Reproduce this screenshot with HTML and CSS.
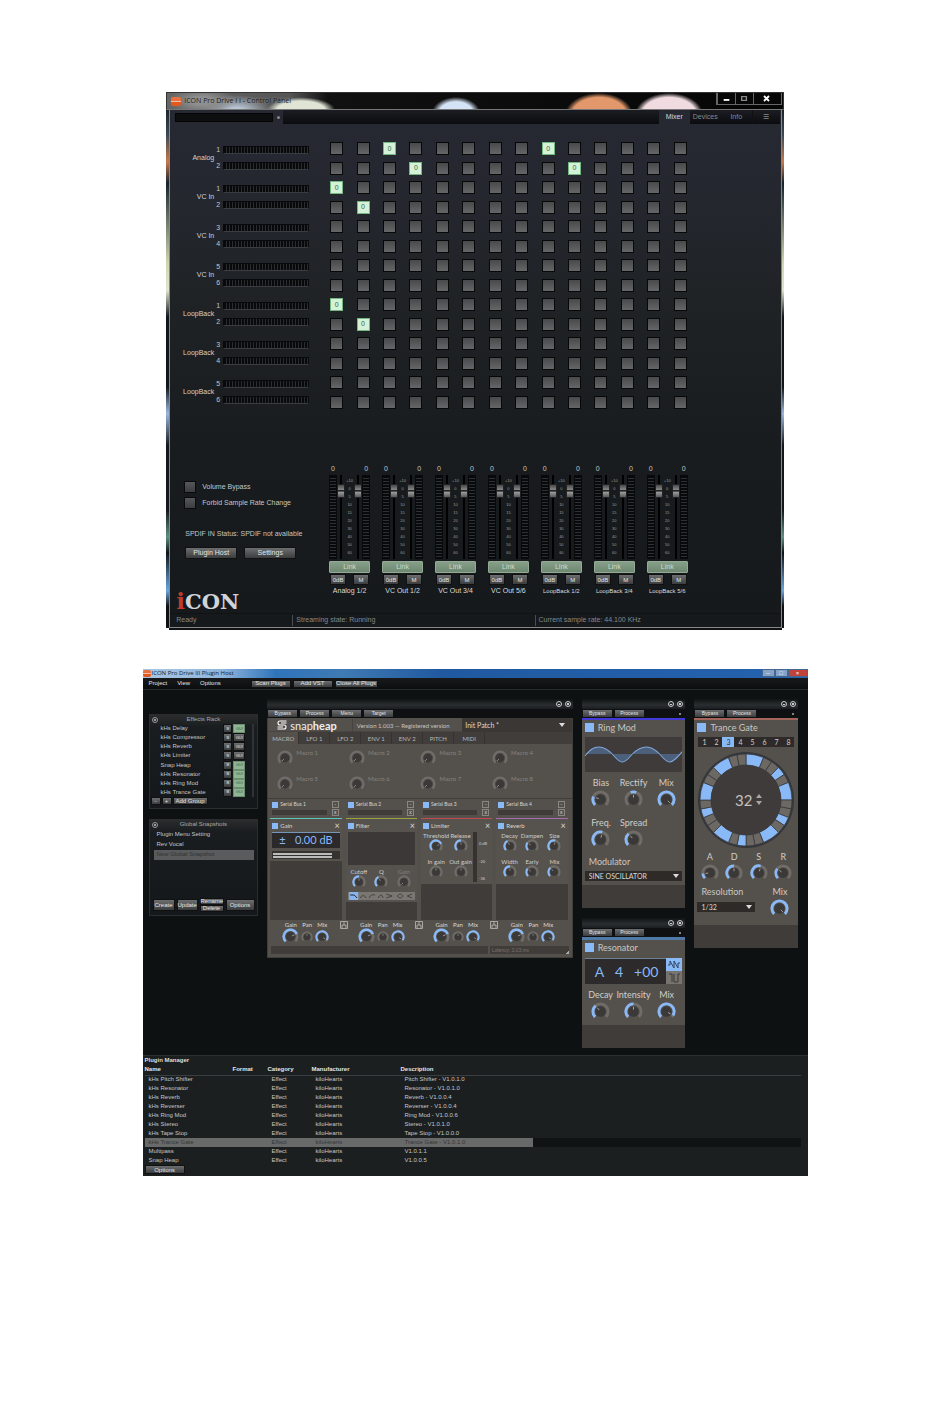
FILE: index.html
```html
<!DOCTYPE html>
<html lang="en">

<head>
    <meta charset="UTF-8">
    <meta name="viewport" content="width=device-width, initial-scale=1.0">
    <title>iCON Pro Drive III</title>
    <link rel="stylesheet" href="styles.css">
</head>

<body>
    <!-- Control panel -->
    <section class="control-panel">
        <header class="cp-title">
            <span class="app-icon"></span>
            <h1>ICON Pro Drive I I - Control Panel</h1>
            <div class="cp-window-buttons">
                <button type="button" aria-label="Minimize"><svg viewBox="0 0 18 11"><path d="M6 7h6" stroke="#fff" stroke-width="2"/></svg></button>
                <button type="button" aria-label="Maximize"><svg viewBox="0 0 18 11"><path d="M6 3.500h5v4h-5z" fill="none" stroke="#888" stroke-width="1.500"/></svg></button>
                <button type="button" class="wide" aria-label="Close"><svg viewBox="0 0 18 11"><path d="M6 3l5 5M11 3l-5 5" stroke="#fff" stroke-width="1.800"/></svg></button>
            </div>
        </header>

        <div class="cp-frame">
            <div class="cp-toolbar">
                <select class="preset" aria-label="Preset"><option></option></select>
                <span class="preset-arrow"></span>
                <nav class="tabs">
                    <button type="button" class="active">Mixer</button>
                    <button type="button">Devices</button>
                    <button type="button">Info</button>
                    <button type="button" class="menu">&#9776;</button>
                </nav>
            </div>

            <div class="routing">
                <div class="inputs" id="inputs"></div>
                <div class="matrix" id="matrix"></div>
            </div>

            <div class="outputs">
                <div class="options">
                    <label class="check"><input type="checkbox">Volume Bypass</label>
                    <label class="check"><input type="checkbox">Forbid Sample Rate Change</label>
                    <p class="spdif">SPDIF IN Status: SPDIF not available</p>
                    <div class="option-buttons">
                        <button type="button" class="btn">Plugin Host</button>
                        <button type="button" class="btn">Settings</button>
                    </div>
                    <div class="logo"><span>i</span>CON</div>
                </div>
                <div class="strips" id="strips"></div>
            </div>

            <footer class="statusbar">
                <span>Ready</span>
                <span>Streaming state: Running</span>
                <span>Current sample rate: 44.100 KHz</span>
            </footer>
        </div>
    </section>

    <!-- Plugin host -->
    <section class="plugin-host">
        <header class="ph-title">
            <span class="app-icon"></span>
            <h2>ICON Pro Drive III Plugin Host</h2>
            <div class="ph-window-buttons">
                <button type="button" aria-label="Minimize">&#8211;</button>
                <button type="button" aria-label="Maximize">&#9633;</button>
                <button type="button" class="close" aria-label="Close">&#215;</button>
            </div>
        </header>
        <div class="ph-menu">
            <nav>
                <a href="#">Project</a>
                <a href="#">View</a>
                <a href="#">Options</a>
            </nav>
            <button type="button" class="btn">Scan Plugs</button>
            <button type="button" class="btn">Add VST</button>
            <button type="button" class="btn">Close All Plugs</button>
        </div>

        <div class="workspace">
            <div class="column side">
                <section class="panel rack">
                    <h3><span class="dot"></span>Effects Rack</h3>
                    <ul id="rack"></ul>
                    <div class="rack-buttons">
                        <button type="button" class="btn">-</button>
                        <button type="button" class="btn">+</button>
                        <button type="button" class="btn">Add Group</button>
                    </div>
                </section>
                <section class="panel snapshots">
                    <h3><span class="dot"></span>Global Snapshots</h3>
                    <ul>
                        <li>Plugin Menu Setting</li>
                        <li>Rev Vocal</li>
                        <li class="selected">New Global Snapshot</li>
                    </ul>
                    <div class="snapshot-buttons">
                        <button type="button" class="btn">Create</button>
                        <button type="button" class="btn">Update</button>
                        <div>
                            <button type="button" class="btn">Rename</button>
                            <button type="button" class="btn">Delete</button>
                        </div>
                        <button type="button" class="btn last">Options</button>
                    </div>
                </section>
            </div>

            <div class="column">
                <section class="plugin">
                    <div class="plugin-bar"><i class="min"></i><i class="close"></i></div>
                    <div class="plugin-buttons">
                        <button type="button" class="btn">Bypass</button>
                        <button type="button" class="btn">Process</button>
                        <button type="button" class="btn">Menu</button>
                        <button type="button" class="btn">Target</button>
                    </div>
                    <div class="snapheap">
                        <div class="sh-header">
                            <div class="sh-brand">
                                <svg viewBox="0 0 10 10"><path d="M9.500 1H3Q1 1 1 3T3 5H7.500M.5 9H7Q9 9 9 7T7 5M9.500 3H4M.5 7H6" fill="none" stroke="#fff" stroke-width="1.100"/></svg>
                                <span>snap<b>heap</b></span>
                            </div>
                            <div class="sh-version">Version 1.003 — Registered version</div>
                            <select class="sh-patch" aria-label="Patch"><option>Init Patch *</option></select>
                        </div>
                        <nav class="sh-tabs">
                            <button type="button" class="active">MACRO</button>
                            <button type="button">LFO 1</button>
                            <button type="button">LFO 2</button>
                            <button type="button">ENV 1</button>
                            <button type="button">ENV 2</button>
                            <button type="button">PITCH</button>
                            <button type="button">MIDI</button>
                        </nav>
                        <div class="macros" id="macros"></div>
                        <div class="lanes">
                            <div class="lane">
                                <div class="bus"><label><input type="checkbox" checked>Serial Bus 1</label><i>-</i><span></span><i>x</i></div>
                                <div class="slot">
                                    <div class="module gain">
                                        <h4><label><input type="checkbox" checked>Gain</label><span>&#215;</span></h4>
                                        <div class="gain-value"><span>±</span><span>0.00 dB</span></div>
                                        <div class="gain-meter"><span></span><span></span></div>
                                    </div>
                                </div>
                                <div class="lane-out"></div>
                            </div>
                            <div class="lane">
                                <div class="bus"><label><input type="checkbox" checked>Serial Bus 2</label><i>-</i><span></span><i>x</i></div>
                                <div class="slot">
                                    <div class="module filter">
                                        <h4><label><input type="checkbox" checked>Filter</label><span>&#215;</span></h4>
                                        <div class="filter-graph"></div>
                                        <div class="knobs three" data-size="14" data-knobs="Cutoff:0.5,Q:0.4,Gain:0"></div>
                                        <div class="filter-types">
                                            <svg viewBox="0 0 65 8">
                                                <rect width="9" height="8" fill="#8ab4ee"/>
                                                <path d="M1 3h4l3 3" stroke="#223" fill="none"/>
                                                <path d="M11 6q3-5 6 0M20 6q1-4 6-3M29 6q3-6 5 0M37 2l6 2-6 2M48 4q3-4 6 0-3 4-6 0M63 2l-5 2 5 2" stroke="#444" fill="none"/>
                                            </svg>
                                        </div>
                                    </div>
                                </div>
                                <div class="lane-out"></div>
                            </div>
                            <div class="lane">
                                <div class="bus"><label><input type="checkbox" checked>Serial Bus 3</label><i>-</i><span></span><i>x</i></div>
                                <div class="slot">
                                    <div class="module limiter">
                                        <h4><label><input type="checkbox" checked>Limiter</label><span>&#215;</span></h4>
                                        <div class="limiter-body">
                                            <div class="knobs two" data-size="14" data-knobs="Threshold:0.75,Release:0.5,In gain:0.5:off,Out gain:0.5:off"></div>
                                            <div class="limiter-meter"></div>
                                            <div class="limiter-scale"><span>0 dB</span><span>-20</span><span>-36</span></div>
                                        </div>
                                    </div>
                                </div>
                                <div class="lane-out"></div>
                            </div>
                            <div class="lane">
                                <div class="bus"><label><input type="checkbox" checked>Serial Bus 4</label><i>-</i><span></span><i>x</i></div>
                                <div class="slot">
                                    <div class="module reverb">
                                        <h4><label><input type="checkbox" checked>Reverb</label><span>&#215;</span></h4>
                                        <div class="knobs three" data-size="14" data-knobs="Decay:0.4,Dampen:0.3,Size:0.55,Width:0.5,Early:0.3,Mix:0.35"></div>
                                    </div>
                                </div>
                                <div class="lane-out"></div>
                            </div>
                        </div>
                        <div class="sh-footer"><span></span><span>Latency: 2.03 ms</span></div>
                    </div>
                </section>
            </div>

            <div class="column">
                <section class="plugin fx">
                    <div class="plugin-bar"><i class="min"></i><i class="close"></i></div>
                    <div class="plugin-buttons">
                        <button type="button" class="btn">Bypass</button>
                        <button type="button" class="btn">Process</button>
                        <span class="led"></span>
                    </div>
                    <div class="fx-body ringmod">
                        <label class="fx-name"><input type="checkbox" checked>Ring Mod</label>
                        <svg class="wave" viewBox="0 0 97 35" preserveAspectRatio="none">
                            <path d="M0 17C5 13 8 10 14 10S24 14 27 17S33 25 37 25S44 20 47 17S55 10 61 10S71 14 74 17S80 25 84 25S92 20 97 15V17Z" fill="#4c5f7b"/>
                            <path d="M0 19C5 13 8 10 14 10S24 14 27 17S33 25 37 25S44 20 47 17S55 10 61 10S71 14 74 17S80 25 84 25S92 20 97 14" fill="none" stroke="#7fa8dc"/>
                        </svg>
                        <div class="knobs three" data-size="19" data-knobs="Bias:0.25,Rectify:0.5:c,Mix:1,Freq.:0.55,Spread:0.35"></div>
                        <label class="field" for="modulator">Modulator</label>
                        <select id="modulator"><option>SINE OSCILLATOR</option></select>
                    </div>
                    <div class="fx-foot"></div>
                </section>

                <section class="plugin fx">
                    <div class="plugin-bar"><i class="min"></i><i class="close"></i></div>
                    <div class="plugin-buttons">
                        <button type="button" class="btn">Bypass</button>
                        <button type="button" class="btn">Process</button>
                        <span class="led"></span>
                    </div>
                    <div class="fx-body resonator">
                        <label class="fx-name"><input type="checkbox" checked>Resonator</label>
                        <div class="note">
                            <div><span>A</span><span>4</span><span>+00</span></div>
                            <svg viewBox="0 0 16 26">
                                <rect width="16" height="13" fill="#8ab9f7"/>
                                <rect y="13" width="16" height="13" fill="#77736e"/>
                                <path d="M2 7h2V3l4 7V3l4 7V5h2" fill="none" stroke="#30425c"/>
                                <path d="M3 16h3v8M8 16v8h4v-8h2" fill="none" stroke="#3b3836"/>
                            </svg>
                        </div>
                        <div class="knobs three" data-size="19" data-knobs="Decay:0.35,Intensity:0.5,Mix:0.95"></div>
                    </div>
                    <div class="fx-foot"></div>
                </section>
            </div>

            <div class="column">
                <section class="plugin fx">
                    <div class="plugin-bar"><i class="min"></i><i class="close"></i></div>
                    <div class="plugin-buttons">
                        <button type="button" class="btn">Bypass</button>
                        <button type="button" class="btn">Process</button>
                        <span class="led"></span>
                    </div>
                    <div class="fx-body trance">
                        <label class="fx-name"><input type="checkbox" checked>Trance Gate</label>
                        <div class="patterns">
                            <button type="button">1</button><button type="button">2</button><button type="button" class="active">3</button><button type="button">4</button><button type="button">5</button><button type="button">6</button><button type="button">7</button><button type="button">8</button>
                        </div>
                        <svg class="wheel" id="wheel" viewBox="-49 -49 98 98"></svg>
                        <div class="knobs four" data-size="18" data-knobs="A:0.15,D:0.5,S:0.55,R:0.3"></div>
                        <div class="resolution">
                            <div>
                                <label class="field" for="resolution">Resolution</label>
                                <select id="resolution"><option>1/32</option></select>
                            </div>
                            <div class="knobs one" data-size="19" data-knobs="Mix:1"></div>
                        </div>
                    </div>
                    <div class="fx-foot"></div>
                </section>
            </div>
        </div>

        <div class="manager">
            <h3>Plugin Manager</h3>
            <table>
                <thead>
                    <tr><th>Name</th><th>Format</th><th>Category</th><th>Manufacturer</th><th>Description</th><th></th></tr>
                </thead>
                <tbody id="plugins"></tbody>
            </table>
            <button type="button" class="btn">Options</button>
        </div>
    </section>

    <script src="script.js"></script>
</body>

</html>
```

FILE: styles.css
```css
:root {
    --blue: #8ab9f7;
    --plate: #54514d;
    --plate-dark: #403c3a;
    --text: #c4c6c8;
}

* {
    margin: 0;
    padding: 0;
    box-sizing: border-box;
}

body {
    background: #fff;
    color: var(--text);
    font-family: "Liberation Sans", Arial, sans-serif;
    font-size: 7px;
    line-height: 8px;
    padding: 92px 0 40px;
}

h1, h2, h3, h4 {
    font-size: inherit;
    font-weight: normal;
}

ul {
    list-style: none;
}

a {
    color: inherit;
    text-decoration: none;
}

svg {
    display: block;
}

button, input, select {
    font: inherit;
    color: inherit;
    border: none;
    background: none;
    appearance: none;
}

.btn {
    background: linear-gradient(#6c6e70, #3a3c3e);
    border: 1px solid #111;
    color: #e4e4e4;
    white-space: nowrap;
    text-align: center;
}

.app-icon {
    width: 10px;
    height: 9px;
    border-radius: 2px;
    background: linear-gradient(#e8703c 40%, #fff0e4 45%, #e2581e 60%);
    flex: none;
}

/* control panel */

.control-panel {
    width: 65%;
    margin: 0 auto 41px;
    background: linear-gradient(#0a0a0a, #3a4a55 8%, #c47a50 13%, #17232c 17%, #cfd6b0 32%, #dfe3cf 37%, #10161b 42%, #10161b 55%, #9bb6dd 60%, #14181c 66%, #14181c 78%, #5f8f80 83%, #0e1418 86%, #6ea6dd 93%, #111 96%);
}

.cp-title {
    height: 18px;
    display: flex;
    align-items: center;
    padding-left: 4px;
    gap: 3px;
    border: 1px solid #333;
    border-bottom-color: #777;
    color: #1a1a1a;
    font-family: "Open Sans", sans-serif;
    background:
        radial-gradient(ellipse 34px 14px at 35px 8px, #8e8e8e 30%, transparent),
        radial-gradient(ellipse 36px 16px at 69px 18px, #b9c5d4 20%, transparent),
        radial-gradient(ellipse 40px 15px at 134px 17px, #dfe4d5 60%, transparent 85%),
        radial-gradient(ellipse 24px 16px at 289px 20px, #d4e3f5 70%, transparent),
        radial-gradient(ellipse 34px 22px at 432px 22px, #e2986a 80%, transparent),
        radial-gradient(ellipse 34px 22px at 502px 22px, #efdbe0 80%, transparent),
        linear-gradient(90deg, #666, #555 20%, #111 26%, #050505);
}

.cp-title h1 {
    flex: 1;
    font-size: 7px;
    text-shadow: 0 0 3px #aaa;
}

.cp-window-buttons {
    display: flex;
    align-self: flex-start;
    margin-right: 1px;
    background: #070707;
    border: 1px solid #666;
    border-top: none;
}

.cp-window-buttons button {
    width: 18px;
    height: 11px;
    display: flex;
    justify-content: center;
    border-left: 1px solid #666;
}

.cp-window-buttons .wide {
    width: 28px;
}

.cp-window-buttons svg {
    width: 18px;
    height: 11px;
}

.cp-frame {
    margin: 0 2px 0 3px;
    border: 1px solid #85898b;
    border-top: none;
    background: linear-gradient(#262932, #24272e 18%, #1e2224 40%, #181c1e 65%, #15191b);
    box-shadow: 0 2px 0 #111;
}

.cp-toolbar {
    display: flex;
    align-items: center;
    height: 14px;
    padding: 0 1px 0 5px;
}

.preset {
    width: 98px;
    height: 9px;
    background: #0d0e10;
    border: 1px solid #050505;
}

.preset-arrow {
    width: 3px;
    height: 3px;
    background: #888;
    border-radius: 50%;
    margin: 0 3px 0 4px;
}

.tabs {
    flex: 1;
    display: flex;
    justify-content: flex-end;
    height: 14px;
    background: linear-gradient(#1c1d23, #0b0c0f);
    color: #85888c;
}

.tabs button {
    width: 31px;
}

.tabs .menu {
    width: 28px;
    border-left: 1px solid #111;
}

.tabs .active {
    color: #d5d7da;
    background: #262932;
}

.routing, .outputs {
    display: grid;
    grid-template-columns: 160fr 358fr 93fr;
}

.routing {
    padding-top: 14px;
}

.inputs {
    display: grid;
    grid-auto-rows: 39px;
}

.input {
    display: grid;
    grid-template-columns: 44px 5px 1fr;
    column-gap: 2px;
    align-items: center;
    padding-right: 21px;
}

.input > span {
    text-align: right;
    color: #d0d2d4;
}

.channels {
    grid-column: 2 / 4;
    display: grid;
    grid-template-columns: 5px 1fr;
    gap: 8px 2px;
    align-items: center;
}

.hmeter {
    height: 8px;
    border: 1px solid #08090a;
    border-bottom-color: #3a3d40;
    background: repeating-linear-gradient(90deg, #08090a 0 2px, #2a2d30 2px 3px);
}

.matrix {
    display: grid;
    grid-template-columns: repeat(14, 13px);
    justify-content: space-between;
    align-content: space-between;
    height: 267px;
    margin: 4px 1px 0 0;
}

.matrix button {
    height: 13px;
    background: linear-gradient(#47494b, #646668);
    border: 1px solid #070808;
}

.matrix .on {
    background: #d3f2d7;
    border-color: #76b680;
    color: #3c6944;
}

.outputs {
    padding-top: 54px;
}

.options {
    padding: 16px 0 0 14px;
}

.check {
    display: flex;
    align-items: center;
    gap: 6px;
    margin-bottom: 4px;
}

.check input {
    width: 12px;
    height: 12px;
    background: linear-gradient(#55575a, #3b3d40);
    border: 1px solid #090a0b;
}

.spdif {
    margin: 21px 0 9px 1px;
    white-space: nowrap;
}

.option-buttons {
    display: flex;
    gap: 7px;
    margin-left: 1px;
}

.option-buttons .btn {
    width: 52px;
    height: 12px;
}

.logo {
    margin: 31px 0 0 -8px;
    font: bold 21px/22px "DejaVu Serif", serif;
    color: #d0d3d8;
}

.logo span {
    color: #bf3b2c;
    font-size: 23px;
}

.strips {
    display: flex;
    justify-content: space-between;
    margin-left: -1px;
}

.strip {
    width: 41px;
}

.peaks, .strip-buttons {
    display: flex;
    justify-content: space-between;
    padding: 0 2px;
}

.faders {
    display: flex;
    height: 84px;
    margin: 2px 0;
}

.vmeter {
    width: 8px;
    border: 1px solid #08090a;
    background: repeating-linear-gradient(#08090a 0 2px, #2e3133 2px 3px);
}

.faders input {
    writing-mode: vertical-lr;
    direction: rtl;
    width: 8px;
    height: 84px;
    background: linear-gradient(90deg, transparent 3px, #000 3px 5px, transparent 5px);
}

.faders input::-webkit-slider-thumb {
    appearance: none;
    width: 8px;
    height: 14px;
    background: linear-gradient(#47494a, #858788 40%, #222 45% 52%, #9c9e9f 58%, #57595a);
    border: 1px solid #222;
}

.scale {
    flex: 1;
    display: flex;
    flex-direction: column;
    justify-content: space-between;
    align-items: center;
    padding: 3px 0 4px;
    font-size: 4px;
    line-height: 5px;
    color: #9a9c9e;
}

.link {
    display: block;
    width: 100%;
    height: 12px;
    background: linear-gradient(#869f88, #6e8871);
    border: 1px solid #94aa95;
    border-radius: 1px;
    color: #c9dccb;
}

.strip-buttons {
    margin: 1px 0 2px;
    padding: 0 1px;
}

.strip-buttons .btn {
    width: 16px;
    height: 11px;
    font-size: 6px;
}

.strip p {
    text-align: center;
    white-space: nowrap;
    color: #d8dadc;
}

.strip.narrow p {
    font-size: 6px;
}

.statusbar {
    display: grid;
    grid-template-columns: 122fr 242fr 246fr;
    height: 14px;
    color: #85888a;
    border-top: 1px solid #101214;
}

.statusbar span {
    padding: 1px 3px 0;
    margin: 1px 0;
    border-left: 1px solid #4b4e50;
    white-space: nowrap;
}

.statusbar span:first-child {
    border: none;
    padding-left: 6px;
}

/* plugin host */

.plugin-host {
    width: 70%;
    margin: 0 auto;
    background: #0e1112;
    font-size: 6px;
    line-height: 7px;
}

.ph-title {
    height: 9px;
    display: flex;
    align-items: center;
    gap: 1px;
    color: #0d1e30;
    background: linear-gradient(90deg, #a9c6e2, #8fb5dc 12%, #2f74ba 20%, #3f7ab4 30%, #2059a0 45%, #2563b0);
}

.ph-title .app-icon {
    width: 8px;
    height: 7px;
}

.ph-title h2 {
    flex: 1;
    font-family: "Open Sans", sans-serif;
}

.ph-window-buttons {
    display: flex;
    height: 8px;
    align-self: flex-start;
    color: #fff;
}

.ph-window-buttons button {
    width: 13px;
    background: #86a3c8;
    border: 1px solid #45678f;
    line-height: 5px;
}

.ph-window-buttons .close {
    width: 20px;
    background: #c04238;
}

.ph-menu {
    display: flex;
    align-items: center;
    gap: 2px;
    height: 12px;
    padding-left: 6px;
    background: linear-gradient(#17191a, #0b0d0e);
    border-bottom: 1px solid #2a2d2e;
}

.ph-menu nav {
    display: flex;
    gap: 10px;
    width: 100px;
    color: #e2e2e2;
}

.ph-menu .btn {
    width: 40px;
    height: 8px;
    line-height: 5px;
}

.ph-menu .btn:last-child {
    width: 43px;
}

.workspace {
    display: grid;
    grid-template-columns: 110fr 306fr 104fr 104fr;
    gap: 9px;
    align-items: start;
    padding: 9px 9px 5px 6px;
    min-height: 365px;
}

.column {
    display: grid;
    gap: 10px;
}

.side {
    padding-top: 15px;
}

.panel {
    background: linear-gradient(#2a2c2d, #1a1d1f 12px, #15181a);
    border: 1px solid #2b2e2f;
    height: 95px;
    display: flex;
    flex-direction: column;
}

.panel h3 {
    display: grid;
    grid-template-columns: 10px 1fr 10px;
    align-items: center;
    text-align: center;
    color: #a8aaac;
    padding-top: 1px;
}

.dot {
    width: 6px;
    height: 6px;
    border: 1px solid #999;
    border-radius: 50%;
    margin-left: 2px;
    background: radial-gradient(#999 1px, transparent 1px);
}

.rack ul {
    flex: 1;
    display: grid;
    grid-auto-rows: 1fr;
    margin: 1px 3px 0 11px;
    border-right: 2px solid #303335;
}

.rack li {
    display: grid;
    grid-template-columns: 1fr 9px 12px;
    gap: 1px;
    align-items: center;
    padding-right: 7px;
}

.rack li .btn {
    height: 9px;
    line-height: 6px;
    font-size: 4px;
}

.rack li .on {
    background: #8fb592;
    color: #40604a;
    border-color: #6c8d70;
}

.rack-buttons {
    display: flex;
    gap: 1px;
    padding: 0 0 3px 1px;
}

.rack-buttons .btn {
    width: 10px;
    height: 8px;
    line-height: 5px;
}

.rack-buttons .btn:last-child {
    width: 35px;
}

.snapshots {
    height: 97px;
}

.snapshots ul {
    margin: 2px 3px 0 4px;
    flex: 1;
}

.snapshots li {
    height: 10px;
    padding: 1px 3px;
}

.snapshots .selected {
    background: #595b5c;
    color: #303234;
}

.snapshot-buttons {
    display: grid;
    grid-template-columns: 22px 21px 24px 29px;
    gap: 2px;
    align-items: center;
    padding: 0 2px 3px 3px;
}

.snapshot-buttons > .btn {
    height: 12px;
}

.snapshot-buttons div .btn {
    display: block;
    width: 100%;
    height: 7px;
    line-height: 5px;
}

.plugin {
    font-family: Lato, "Open Sans", sans-serif;
}

.plugin-bar {
    height: 10px;
    background: linear-gradient(#111415, #2b2e30 60%, #1b1e20);
    display: flex;
    justify-content: flex-end;
    gap: 3px;
    padding: 2px 2px 0;
}

.plugin-bar i {
    width: 6px;
    height: 6px;
    border: 1px solid #c9cbcc;
    border-radius: 50%;
    background: linear-gradient(#c9cbcc, #c9cbcc) center / 2px 1px no-repeat;
}

.plugin-bar .close {
    background-size: 2px 2px;
}

.plugin-buttons {
    display: flex;
    gap: 3px;
    height: 9px;
    padding: 1px;
    background: #0e1012;
}

.plugin-buttons .btn {
    width: 29px;
    height: 7px;
    line-height: 5px;
    border: none;
    font-family: "Liberation Sans", Arial, sans-serif;
    font-size: 5px;
}

.led {
    width: 2px;
    height: 2px;
    margin: 3px 3px 0 auto;
    border-radius: 50%;
    background: #aaa;
}

/* Snap Heap */

.snapheap {
    background: var(--plate);
    border: 1px solid #403d3b;
    border-top: none;
}

.sh-header {
    display: grid;
    grid-template-columns: 84fr 111fr 110fr;
    height: 14px;
    align-items: center;
    border-bottom: 1px solid #484542;
}

.sh-brand {
    display: flex;
    align-items: center;
    gap: 3px;
    padding-left: 9px;
    font-size: 11px;
    line-height: 13px;
    color: #eee;
}

.sh-brand svg {
    width: 10px;
    height: 10px;
}

.sh-version {
    border-left: 1px solid #47443f;
    padding-left: 4px;
    font-size: 6px;
    line-height: 13px;
    color: #c6c3bf;
    white-space: nowrap;
}

.sh-patch, .fx-body select {
    background: #2d2a28;
    background-image: url("data:image/svg+xml,%3Csvg xmlns='http://www.w3.org/2000/svg' viewBox='0 0 6 4'%3E%3Cpath d='M0 0h6L3 4z' fill='%23ddd'/%3E%3C/svg%3E");
    background-repeat: no-repeat;
    background-size: 6px 4px;
    color: #dcdad7;
}

.sh-patch {
    height: 14px;
    padding-left: 3px;
    font-size: 7px;
    background-color: #3a3735;
    background-position: right 7px center;
}

.sh-tabs {
    display: flex;
    height: 12px;
    background: #403d3b;
    color: #bbb8b4;
}

.sh-tabs button {
    width: 31px;
    border-right: 1px solid #353230;
}

.sh-tabs .active {
    background: var(--plate);
}

.macros {
    display: grid;
    grid-template-columns: repeat(4, 1fr);
    grid-auto-rows: 26px;
    padding: 1px 8px 1px 9px;
    color: #86837f;
    border-bottom: 1px solid #403d3b;
}

.macros div {
    display: flex;
    gap: 3px;
    padding-top: 4px;
}

.macros .knob {
    margin-top: 1px;
}

.knob {
    flex: none;
}

.lanes {
    display: grid;
    grid-template-columns: repeat(4, 1fr);
    gap: 4px;
    padding: 2px 4px 0 2px;
}

.bus {
    display: grid;
    grid-template-columns: 1fr 7px;
    gap: 1px 5px;
    align-items: center;
    padding: 0 3px 0 2px;
    font-size: 5px;
    color: #d8d5d1;
}

.bus label, .module label, .fx-name {
    display: flex;
    align-items: center;
    gap: 2px;
}

.bus input, .module input, .fx-name input {
    width: 6px;
    height: 6px;
    background: var(--blue);
}

.bus span {
    height: 5px;
    background: #3f3b39;
}

.bus i {
    height: 7px;
    line-height: 5px;
    font-style: normal;
    text-align: center;
    border: 1px solid #8a8783;
}

.slot {
    height: 102px;
    margin-top: 2px;
    background: var(--plate-dark);
}

.module {
    background: #56534f;
    border-top: 1px solid #5cc4b8;
    padding: 0 2px 2px;
}

.module.filter { border-top-color: #9da33a; }
.module.limiter { border-top-color: #c44a50; }
.module.reverb { border-top-color: #a76bb0; }

.module h4 {
    display: flex;
    justify-content: space-between;
    height: 13px;
    align-items: center;
    color: #d8d5d1;
}

.module h4 span {
    font-size: 9px;
}

.gain-value {
    display: flex;
    justify-content: space-between;
    background: #2b292a;
    color: var(--blue);
    font-size: 11px;
    line-height: 14px;
    height: 16px;
    padding: 0 7px;
    border-top: 1px solid #7795b8;
}

.gain-meter {
    margin-top: 3px;
    height: 8px;
    background: #36332f;
    padding: 2px 8px 1px 1px;
    display: grid;
    gap: 1px;
}

.gain-meter span {
    background: #bbb;
}

.filter-graph {
    height: 33px;
    background: linear-gradient(#3b3837 50%, #464341 50% 52%, #3b3837 52%);
    margin-bottom: 3px;
}

.knobs {
    display: grid;
    color: #d0cdc9;
    justify-items: center;
}

.knobs.two { grid-template-columns: 1fr 1fr; }
.knobs.three { grid-template-columns: repeat(3, 1fr); }
.knobs.four { grid-template-columns: repeat(4, 1fr); }

.knobs > div {
    display: grid;
    justify-items: center;
    white-space: nowrap;
}

.filter .knobs > div:last-child {
    color: #85827e;
}

.filter-types {
    background: #7a7773;
    margin-top: 3px;
}

.filter-types svg {
    width: 100%;
    height: 8px;
}

.limiter-body {
    display: grid;
    grid-template-columns: 48px 4px 1fr;
    gap: 2px;
}

.limiter-meter {
    background: #353230;
}

.limiter-scale {
    display: flex;
    flex-direction: column;
    justify-content: space-between;
    padding: 8px 0 0;
    font-size: 4px;
    color: #d0cdc9;
    white-space: nowrap;
}

.limiter .knobs, .reverb .knobs {
    row-gap: 5px;
    padding-bottom: 3px;
}

.lane-out {
    display: flex;
    gap: 2px;
    height: 26px;
    padding: 1px 0 0 12px;
    color: #dcdad6;
    position: relative;
}

.lane-out > div {
    display: grid;
    grid-template-rows: 7px 17px;
    align-items: center;
    justify-items: center;
}

.lane-out .split {
    position: absolute;
    right: -6px;
    top: 1px;
    width: 8px;
    height: 8px;
}

.sh-footer {
    display: grid;
    grid-template-columns: 1fr 79px;
    gap: 2px;
    padding: 0 3px 3px;
    font-size: 5px;
    line-height: 8px;
    color: #77736f;
}

.sh-footer span {
    background: #403c3a;
    height: 8px;
    padding-left: 2px;
}

.sh-footer span:last-child {
    background: linear-gradient(135deg, transparent 75%, #aaa 75%) right / 6px 7px no-repeat #403c3a;
}

/* small effects */

.fx {
    font-size: 9px;
    line-height: 11px;
}

.fx-body {
    background: var(--plate);
    border-top: 2px solid #4338d8;
    padding: 2px 3px 4px;
}

.fx-body.resonator { border-top: 3px solid #4f7aa8; }
.fx-body.trance { border-top-color: #a4665a; }

.fx-name {
    gap: 4px;
    color: #c9c6c2;
}

.fx-name input {
    width: 9px;
    height: 9px;
}

.wave {
    width: 100%;
    height: 35px;
    margin: 4px 0 5px;
    background: #3f3b3a;
}

.fx .knobs {
    row-gap: 8px;
}

.fx .knobs .knob {
    margin-top: 2px;
}

.field {
    display: block;
    color: #c9c6c2;
    padding-left: 4px;
}

.ringmod .field {
    margin: 7px 0 3px;
}

.fx-body select {
    width: 100%;
    height: 10px;
    padding-left: 4px;
    font-size: 7px;
    background-position: right 3px center;
}

.fx-foot {
    height: 23px;
    background: #403c3a;
}

.note {
    display: flex;
    height: 26px;
    margin: 5px 0;
}

.note div {
    flex: 1;
    display: flex;
    justify-content: space-between;
    padding: 0 8px 0 10px;
    background: #2c2a2b;
    color: var(--blue);
    font-size: 14px;
    line-height: 25px;
    border-top: 1px solid #6d7f94;
}

.note svg {
    width: 16px;
    height: 26px;
}

.patterns {
    display: grid;
    grid-template-columns: repeat(8, 1fr);
    margin: 4px 1px;
}

.patterns button {
    height: 10px;
    line-height: 10px;
    font-size: 7px;
    background: #2d2a29;
    color: #d0cdc9;
}

.patterns .active {
    background: var(--blue);
    color: #233;
}

.wheel {
    width: 98px;
    height: 98px;
    margin: 0 auto;
}

.wheel text {
    font-size: 15px;
    fill: #c4c1bd;
}

.trance > .knobs {
    margin-top: 2px;
}

.resolution {
    display: flex;
    justify-content: space-between;
    padding: 4px 6px 3px 0;
}

.resolution select {
    width: 58px;
    display: block;
    margin-top: 5px;
}

/* plugin manager */

.manager {
    background: #1c1f20;
    border-top: 1px solid #2c2f30;
    padding: 0 7px 2px 2px;
}

.manager h3 {
    font-weight: bold;
    line-height: 8px;
    color: #ddd;
}

.manager table {
    width: 100%;
    table-layout: fixed;
    border-collapse: collapse;
}

.manager tr {
    height: 9px;
}

.manager th {
    text-align: left;
    color: #e4e4e4;
    border-bottom: 1px solid #3b3e40;
    height: 11px;
}

.manager td {
    padding-left: 4px;
    white-space: nowrap;
}

.manager th:nth-child(1) { width: 88px; }
.manager th:nth-child(2) { width: 35px; }
.manager th:nth-child(3) { width: 44px; }
.manager th:nth-child(4) { width: 89px; }
.manager th:nth-child(5) { width: 132px; }

.manager .selected td {
    background: #686a6a;
    color: #343637;
}

.manager .selected td:last-child {
    background: #101314;
}

.manager .btn {
    display: block;
    width: 40px;
    height: 9px;
    line-height: 6px;
}
```

FILE: script.js
```js
const byId = id => document.getElementById(id);

// knob with a 270 degree arc, value is 0..1
function knob(size, value, color, mode) {
    const point = v => {
        const a = (v * 270 - 225) * Math.PI / 180;
        return (Math.cos(a) * 8).toFixed(2) + ' ' + (Math.sin(a) * 8).toFixed(2);
    };
    const arc = (from, to, stroke) =>
        `<path d="M${point(from)}A8 8 0 ${to - from > 0.667 ? 1 : 0} 1 ${point(to)}" fill="none" stroke="${stroke}" stroke-width="3"/>`;
    const a = (value * 270 - 225) * Math.PI / 180;
    let svg = `<svg class="knob" width="${size}" height="${size}" viewBox="-10 -10 20 20">`;
    svg += arc(0, 1, '#706d69');
    if (mode === 'c') {
        svg += arc(0.42, 0.58, color);
    } else if (mode !== 'off' && value > 0) {
        svg += arc(0, value, color);
    }
    svg += '<circle r="5.5" fill="#3b3938"/>';
    svg += `<path d="M${Math.cos(a) * 2} ${Math.sin(a) * 2}L${Math.cos(a) * 5} ${Math.sin(a) * 5}" stroke="#aaa"/></svg>`;
    return svg;
}

// inputs
const inputs = [['Analog', 1], ['VC In', 1], ['VC In', 3], ['VC In', 5], ['LoopBack', 1], ['LoopBack', 3], ['LoopBack', 5]];
byId('inputs').innerHTML = inputs.map(([name, n]) => `
    <div class="input"><span>${name}</span>
        <div class="channels"><span>${n}</span><div class="hmeter"></div><span>${n + 1}</span><div class="hmeter"></div></div>
    </div>`).join('');

// routing matrix
const routed = ['0-2', '0-8', '1-3', '1-9', '2-0', '3-1', '8-0', '9-1'];
let cells = '';
for (let row = 0; row < 14; row++) {
    for (let col = 0; col < 14; col++) {
        const on = routed.includes(row + '-' + col);
        cells += `<button type="button"${on ? ' class="on"' : ''} aria-label="Route ${row + 1} to ${col + 1}">${on ? '0' : ''}</button>`;
    }
}
byId('matrix').innerHTML = cells;

// output strips
const outputs = ['Analog 1/2', 'VC Out 1/2', 'VC Out 3/4', 'VC Out 5/6', 'LoopBack 1/2', 'LoopBack 3/4', 'LoopBack 5/6'];
const marks = ['+10', '0', '5', '10', '15', '20', '30', '40', '50', '60'];
byId('strips').innerHTML = outputs.map(name => `
    <div class="strip${name.startsWith('Loop') ? ' narrow' : ''}">
        <div class="peaks"><span>0</span><span>0</span></div>
        <div class="faders">
            <div class="vmeter"></div>
            <input type="range" value="87" aria-label="${name} left">
            <div class="scale">${marks.map(m => `<span>${m}</span>`).join('')}</div>
            <input type="range" value="87" aria-label="${name} right">
            <div class="vmeter"></div>
        </div>
        <button type="button" class="link">Link</button>
        <div class="strip-buttons"><button type="button" class="btn">0dB</button><button type="button" class="btn">M</button></div>
        <p>${name}</p>
    </div>`).join('');

// effects rack
const rack = [['kHs Delay', 1], ['kHs Compressor', 0], ['kHs Reverb', 0], ['kHs Limiter', 0], ['Snap Heap', 1], ['kHs Resonator', 1], ['kHs Ring Mod', 1], ['kHs Trance Gate', 1]];
byId('rack').innerHTML = rack.map(([name, on]) =>
    `<li><span>${name}</span><button type="button" class="btn">B</button><button type="button" class="btn${on ? ' on' : ''}">GUI</button></li>`).join('');

// Snap Heap
let macros = '';
for (let i = 1; i <= 8; i++) {
    macros += `<div>${knob(16, 0, '#777')}<span>Macro ${i}</span></div>`;
}
byId('macros').innerHTML = macros;

const laneOuts = document.querySelectorAll('.lane-out');
laneOuts.forEach((el, i) => {
    el.innerHTML = `<div>Gain${knob(17, 0.75, '#8ab9f7')}</div><div>Pan${knob(12, 0.5, '#8ab9f7', 'off')}</div><div>Mix${knob(14, 0.95, '#8ab9f7')}</div>`;
    if (i < laneOuts.length - 1) {
        el.innerHTML += '<svg class="split" viewBox="0 0 8 8"><path d="M.5.5h7v7h-7zM4 1v3M2 7V4h4v3" fill="none" stroke="#aaa7a3"/></svg>';
    }
});

document.querySelectorAll('[data-knobs]').forEach(el => {
    el.innerHTML = el.dataset.knobs.split(',').map(item => {
        const [name, value, mode] = item.split(':');
        return `<div>${name}${knob(el.dataset.size, Number(value), '#8ab9f7', mode)}</div>`;
    }).join('');
});

// Trance Gate wheel: [first step, number of steps, on] in 32 steps
const steps = [[0, 2, 1], [2, 1], [3, 1], [4, 1, 1], [5, 1], [6, 2, 1], [8, 1], [9, 1], [10, 1, 1], [11, 1], [12, 2, 1],
    [14, 1], [15, 1], [16, 1, 1], [17, 1], [18, 2, 1], [20, 1], [21, 1], [22, 1, 1], [23, 1], [24, 2, 1], [26, 1], [27, 1],
    [28, 2, 1], [30, 1], [31, 1]];
const polar = (r, step) => {
    const a = (step * 11.25 - 90) * Math.PI / 180;
    return (Math.cos(a) * r).toFixed(2) + ' ' + (Math.sin(a) * r).toFixed(2);
};
byId('wheel').innerHTML = '<circle r="48" fill="#35373b"/>' + steps.map(([start, count, on]) =>
    `<path d="M${polar(46, start)}A46 46 0 0 1 ${polar(46, start + count)}L${polar(35, start + count)}A35 35 0 0 0 ${polar(35, start)}Z" fill="${on ? '#8ab9f7' : '#6c6864'}" stroke="#35373b" stroke-width=".7"/>`).join('') +
    '<circle r="35" fill="#3f3b3a"/><text x="-11" y="6">32</text><path d="M10-2h6l-3-4zM10 1h6l-3 4z" fill="#aaa7a3"/>';

// plugin manager
const plugins = [
    ['kHs Pitch Shifter', 'Pitch Shifter - V1.0.1.0'],
    ['kHs Resonator', 'Resonator - V1.0.1.0'],
    ['kHs Reverb', 'Reverb - V1.0.0.4'],
    ['kHs Reverser', 'Reverser - V1.0.0.4'],
    ['kHs Ring Mod', 'Ring Mod - V1.0.0.6'],
    ['kHs Stereo', 'Stereo - V1.0.1.0'],
    ['kHs Tape Stop', 'Tape Stop - V1.0.0.0'],
    ['kHs Trance Gate', 'Trance Gate - V1.0.1.0'],
    ['Multipass', 'V1.0.1.1'],
    ['Snap Heap', 'V1.0.0.5']
];
byId('plugins').innerHTML = plugins.map(([name, text]) =>
    `<tr${name === 'kHs Trance Gate' ? ' class="selected"' : ''}><td>${name}</td><td></td><td>Effect</td><td>kiloHearts</td><td>${text}</td><td></td></tr>`).join('');
```
